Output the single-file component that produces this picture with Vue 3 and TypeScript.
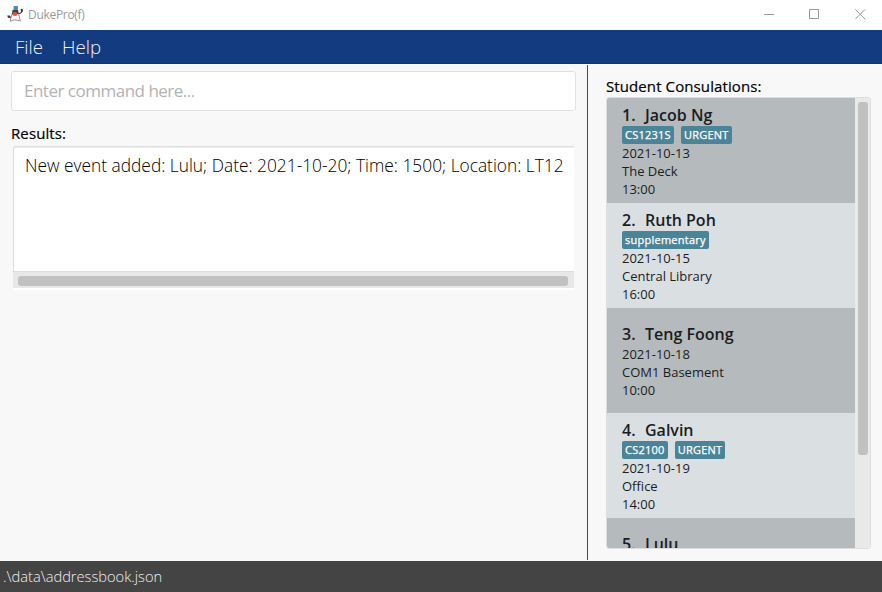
<script setup lang="ts">
interface Consultation {
  name: string
  tags: string[]
  date: string
  place: string
  time: string
}

const menus: string[] = ['File', 'Help']
const result = 'New event added: Lulu; Date: 2021-10-20; Time: 1500; Location: LT12'
const consultations: Consultation[] = [
  { name: 'Jacob Ng', tags: ['CS1231S', 'URGENT'], date: '2021-10-13', place: 'The Deck', time: '13:00' },
  { name: 'Ruth Poh', tags: ['supplementary'], date: '2021-10-15', place: 'Central Library', time: '16:00' },
  { name: 'Teng Foong', tags: [], date: '2021-10-18', place: 'COM1 Basement', time: '10:00' },
  { name: 'Galvin', tags: ['CS2100', 'URGENT'], date: '2021-10-19', place: 'Office', time: '14:00' },
  { name: 'Lulu', tags: [], date: '', place: '', time: '' },
]
</script>

<template>
  <div class="window">
    <header class="titlebar">
      <svg class="logo" width="17" height="18" viewBox="0 0 17 18">
        <path d="M1.500 11.500 3.500 12.500 6.500 9.500M11.500 9 14.500 7.500 14.500 5" fill="none" stroke="#444" stroke-width="1.200" />
        <path d="M0.300 10.500h2.500v2.300H1zM13.500 4.200l1.800-.6.8 2.400-1.500 1.400z" fill="#333" />
        <path d="M5.500 8 11 7.500 12.300 11.500 13.300 16 10.500 15.200 7.500 14.800 3 16.200 4 12.500z" fill="#f7f7f7" stroke="#888" stroke-width=".9" />
        <path d="M5.500 5 11 4.500 11.800 9 5 9.500z" fill="#3a3f48" />
        <path d="M6.500 1.200 10.800.8 11 4.700 6.500 5.200z" fill="#4f86b5" />
        <ellipse cx="8" cy="9" rx="2.400" ry="2.100" fill="#e3503f" />
      </svg>
      <span class="title">DukePro(f)</span>
      <div class="controls">
        <svg width="11" height="11" viewBox="0 0 11 11"><path d="M0 5.500h10" /></svg>
        <svg width="11" height="11" viewBox="0 0 11 11"><path d="M.5.5h9v9h-9z" /></svg>
        <svg class="close" width="11" height="11" viewBox="0 0 11 11"><path d="M.3.300 10.200 10.200M10.200.3.300 10.200" /></svg>
      </div>
    </header>
    <nav class="menubar">
      <span v-for="menu in menus" :key="menu">{{ menu }}</span>
    </nav>
    <main class="content">
      <section class="left">
        <input class="command" type="text" placeholder="Enter command here..." />
        <h2 class="heading results-heading">Results:</h2>
        <div class="results">
          <div class="output">{{ result }}</div>
          <div class="hscroll"><div class="hthumb"></div></div>
        </div>
      </section>
      <section class="right">
        <h2 class="heading">Student Consulations:</h2>
        <div class="list">
          <div class="cards">
            <article v-for="(item, index) in consultations" :key="item.name" class="card">
              <h3><span class="number">{{ index + 1 }}.</span>{{ item.name }}</h3>
              <div v-if="item.tags.length" class="tags">
                <span v-for="tag in item.tags" :key="tag" class="tag">{{ tag }}</span>
              </div>
              <p>{{ item.date }}</p>
              <p>{{ item.place }}</p>
              <p>{{ item.time }}</p>
            </article>
          </div>
          <div class="vscroll"><div class="vthumb"></div></div>
        </div>
      </section>
    </main>
    <footer class="status">.\data\addressbook.json</footer>
  </div>
</template>

<style>
body {
  margin: 0;
  overflow: hidden;
}
</style>

<style scoped>
.window,
.window * {
  box-sizing: border-box;
}
.window {
  display: flex;
  flex-direction: column;
  width: 882px;
  height: 592px;
  overflow: hidden;
  background: #f8f8f8;
  font-family: "Open Sans", "Noto Sans", sans-serif;
}
.titlebar {
  display: flex;
  align-items: center;
  height: 30px;
  flex: none;
  padding: 0 16px 0 7px;
  background: #fff;
}
.logo {
  margin-top: -2px;
}
.title {
  margin-left: 4px;
  color: #999;
  font-size: 12px;
  letter-spacing: -0.3px;
  line-height: 18px;
}
.controls {
  display: flex;
  gap: 34px;
  margin-left: auto;
  margin-top: -2px;
}
.close {
  margin-left: 1px;
}
.controls path {
  fill: none;
  stroke: #999;
  stroke-width: 1;
}
.menubar {
  display: flex;
  gap: 19px;
  height: 34px;
  flex: none;
  padding: 0 15px;
  background: #133b80;
  border-bottom: 1px solid #0e3577;
  color: #eef1f7;
  font-size: 18.667px;
  font-weight: 300;
  line-height: 34px;
}
.content {
  display: flex;
  flex: 1;
  min-height: 0;
}
.left {
  width: 588px;
  height: 495px;
  margin-top: 1px;
  padding: 6px 12px 0 11px;
  border-right: 1px solid #4b4b4d;
}
.command {
  display: block;
  width: 565px;
  height: 40px;
  padding: 0 12px 1px;
  border: 1px solid #e1e1e1;
  border-radius: 3px;
  background: #fff;
  font-family: inherit;
  font-size: 17px;
  letter-spacing: -0.5px;
  font-weight: 400;
  outline: none;
}
.command::placeholder {
  color: #b2b2b2;
}
.heading {
  margin: 0;
  color: #000;
  font-size: 15px;
  letter-spacing: 0.1px;
  font-weight: 400;
  line-height: 20px;
  -webkit-text-stroke: 0.2px #000;
}
.results-heading {
  margin-top: 12px;
}
.results {
  width: 561px;
  height: 144px;
  margin: 3px 0 0 2px;
  border-bottom: 2px solid #fff;
}
.output {
  height: 126px;
  padding: 7px 0 0 11px;
  border: 1px solid #dedede;
  border-right: 0;
  border-radius: 3px 0 0 0;
  background: #fff;
  box-shadow: inset 0 1px 1px #eee;
  color: #000;
  font-size: 17.333px;
  font-weight: 300;
  line-height: 23px;
  white-space: nowrap;
}
.hscroll {
  height: 16px;
  padding: 4px 6px 2px 5px;
  background: #e8e8e8;
}
.hthumb {
  height: 10px;
  border-radius: 3px;
  background: #c1c1c1;
}
.right {
  padding: 12px 0 0 18px;
}
.list {
  display: flex;
  width: 265px;
  height: 452px;
  margin-top: 1px;
  border: 1px solid #dedede;
  border-radius: 3px;
  overflow: hidden;
}
.cards {
  width: 248px;
  height: 450px;
  overflow: hidden;
}
.card {
  display: flex;
  flex-direction: column;
  justify-content: center;
  height: 105px;
  padding: 0 15px;
  color: #1b1d1e;
}
.card:nth-child(odd) {
  background: #b5babd;
}
.card:nth-child(even) {
  background: #dadfe2;
}
.card h3 {
  display: flex;
  margin: 0;
  font-size: 16px;
  font-weight: 600;
  line-height: 22px;
}
.number {
  width: 23px;
}
.tags {
  display: flex;
  gap: 7px;
  height: 18px;
}
.tag {
  padding: 0 3px;
  border-radius: 2px;
  background: #4c8497;
  color: #fff;
  font-size: 11px;
  letter-spacing: 0.25px;
  font-weight: 400;
  line-height: 18px;
  -webkit-text-stroke: 0.25px #fff;
}
.card p {
  height: 18px;
  margin: 0;
  font-size: 13px;
  line-height: 18px;
}
.vscroll {
  flex: 1;
  padding: 4px 2px 0 3px;
  background: #e9e9e9;
}
.vthumb {
  height: 353px;
  border-radius: 3px;
  background: #c1c1c1;
}
.status {
  height: 31px;
  flex: none;
  padding-left: 3px;
  background: #444;
  color: #f0f0f0;
  font-size: 14.667px;
  font-weight: 300;
  line-height: 31px;
}
</style>
